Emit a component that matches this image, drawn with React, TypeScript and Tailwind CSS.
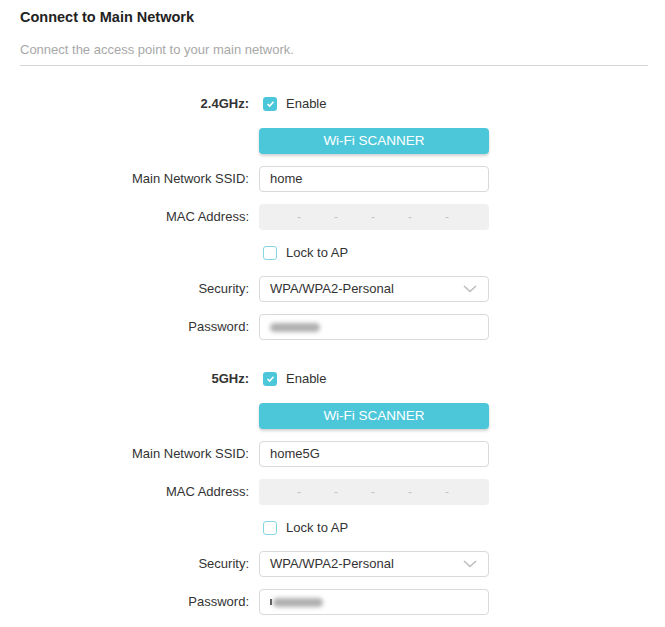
import React from 'react';

const font = { fontFamily: '"Liberation Sans", Arial, sans-serif' };

const Row = ({ label, bold, children, h = 'h-[26px]' }: { label?: string; bold?: boolean; children: React.ReactNode; h?: string }) => (
  <div className={`flex items-center ${h}`}>
    <div className={`w-[250px] shrink-0 pr-[1px] text-right text-[13px] text-[#333] ${bold ? 'font-bold' : ''}`}>
      {label ? `${label}:` : ''}
    </div>
    <div className="ml-[9px] w-[230px]">{children}</div>
  </div>
);

const Check = ({ checked, text }: { checked: boolean; text: string }) => (
  <div className="flex items-center gap-[9px] pl-[4px]">
    {checked ? (
      <span className="flex h-[14px] w-[14px] items-center justify-center rounded-[3px] bg-[#4cc7da]">
        <svg width="9" height="8" viewBox="0 0 9 8">
          <polyline points="1.5,4 3.6,6 7.5,1.8" fill="none" stroke="#fff" strokeWidth="1.6" />
        </svg>
      </span>
    ) : (
      <span className="h-[14px] w-[14px] rounded-[3px] border border-[#84d6e2] bg-white" />
    )}
    <span className="text-[13px] text-[#333]">{text}</span>
  </div>
);

const Input = ({ children, gray }: { children?: React.ReactNode; gray?: boolean }) => (
  <div
    className={`flex h-[26px] items-center rounded-[4px] px-[10px] text-[13px] text-[#333] ${
      gray ? 'bg-[#f0f0f0]' : 'border border-[#d9d9d9] bg-white'
    }`}
  >
    {children}
  </div>
);

const Section = ({ band, ssid, tick }: { band: string; ssid: string; tick?: boolean }) => (
  <div className="flex flex-col gap-[12px]">
    <Row label={band} bold h="h-[24px]">
      <Check checked text="Enable" />
    </Row>
    <Row>
      <button className="flex h-[26px] w-full items-center justify-center rounded-[4px] bg-[#4cc7da] text-[13.5px] text-white shadow-[0_2px_3px_rgba(0,0,0,0.18)]">
        Wi-Fi SCANNER
      </button>
    </Row>
    <Row label="Main Network SSID">
      <Input>{ssid}</Input>
    </Row>
    <Row label="MAC Address">
      <Input gray>
        <div className="flex w-full justify-between pl-[28px] pr-[30px] text-[12px] text-[#c4c4c4]">
          <span>-</span>
          <span>-</span>
          <span>-</span>
          <span>-</span>
          <span>-</span>
        </div>
      </Input>
    </Row>
    <Row h="h-[22px]">
      <Check checked={false} text="Lock to AP" />
    </Row>
    <Row label="Security">
      <Input>
        <span className="flex-1">WPA/WPA2-Personal</span>
        <svg width="14" height="8" viewBox="0 0 14 8" className="mr-[1px]">
          <polyline points="1,1 7,6.5 13,1" fill="none" stroke="#bdbdbd" strokeWidth="1.6" />
        </svg>
      </Input>
    </Row>
    <Row label="Password">
      <Input>
        {tick && <span className="mr-[1px] h-[6px] w-[1.5px] bg-[#555]" />}
        <span className="h-[9px] w-[50px] rounded-full bg-[#b0b0b0] blur-[2px]" />
      </Input>
    </Row>
  </div>
);

export default function App() {
  return (
    <div className="min-h-screen bg-white pl-[20px] pr-[17px] pt-[9px]" style={font}>
      <h1 className="text-[14.5px] font-bold leading-[17px] text-[#222]">Connect to Main Network</h1>
      <p className="mt-[16px] text-[13px] leading-[15px] text-[#a8a8a8]">Connect the access point to your main network.</p>
      <div className="mt-[8px] h-px bg-[#d6d6d6]" />
      <div className="-ml-[20px] mt-[26px] flex flex-col gap-[27px]">
        <Section band="2.4GHz" ssid="home" />
        <Section band="5GHz" ssid="home5G" tick />
      </div>
    </div>
  );
}
